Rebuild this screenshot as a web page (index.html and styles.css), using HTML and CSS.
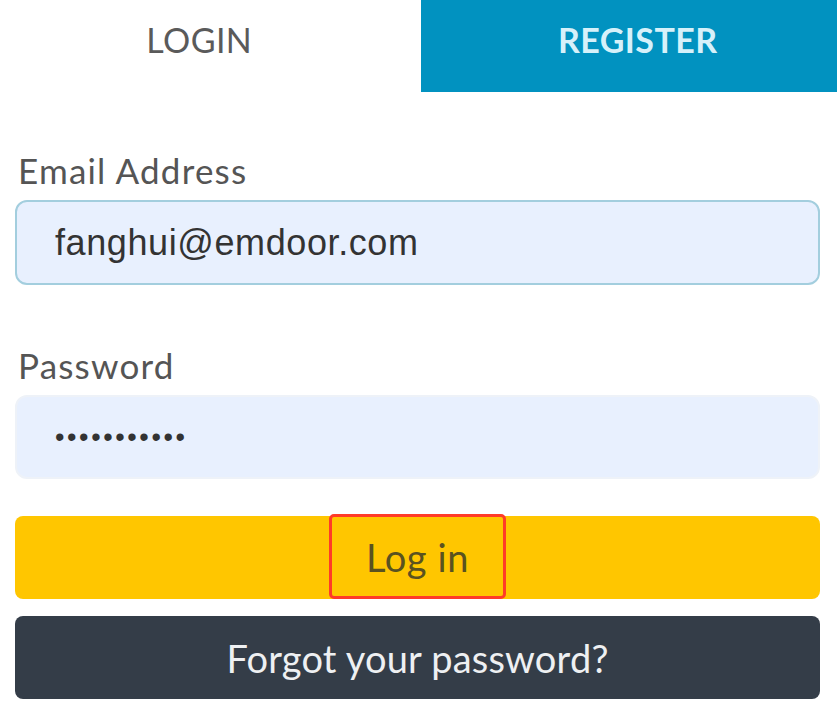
FILE: index.html
```html
<!DOCTYPE html>
<html lang="en">
<head>
  <meta charset="UTF-8" />
  <meta name="viewport" content="width=device-width, initial-scale=1.0"/>
  <title>Login</title>
  <link rel="stylesheet" href="styles.css">
</head>
<body>

<div class="tabs">
  <div class="tab active">LOGIN</div>
  <div class="tab register">REGISTER</div>
</div>

<form class="login-form" onsubmit="return false">
  <label for="email">Email Address</label>
  <input type="text" id="email" class="field focused" value="fanghui@emdoor.com">

  <label for="password" class="second">Password</label>
  <input type="password" id="password" class="field" value="12345678901">

  <button type="submit" class="btn btn-login"><span class="mark">Log in</span></button>
  <button type="button" class="btn btn-forgot">Forgot your password?</button>
</form>

</body>
</html>
```

FILE: styles.css
```css
body {
  margin: 0;
  background: #fff;
  font-family: Lato, "Open Sans", sans-serif;
}

.tabs {
  display: flex;
  height: 92px;
}

.tab {
  flex: 1;
  display: flex;
  align-items: center;
  justify-content: center;
  padding-bottom: 13px;
  box-sizing: border-box;
  font-size: 34px;
  letter-spacing: 0.4px;
}

.tab.active {
  color: #5a5a5a;
  padding-right: 22px;
}

.tab.register {
  background: #0192c0;
  color: #d6f1fa;
  font-weight: bold;
  padding-left: 18px;
}

.login-form {
  padding: 58px 17px 0 15px;
  display: flex;
  flex-direction: column;
}

label {
  font-size: 35px;
  color: #555;
  line-height: 40px;
  letter-spacing: 1.2px;
  margin-left: 3px;
  margin-bottom: 10px;
}

label.second {
  margin-top: 60px;
}

.field {
  height: 85px;
  box-sizing: border-box;
  border: 2px solid #eef2f8;
  border-radius: 12px;
  background: #e8f0fe;
  padding: 0 38px;
  font-family: "Liberation Sans", Arial, sans-serif;
  font-size: 36px;
  letter-spacing: 0.6px;
  color: #333;
  outline: none;
}

.field.focused {
  border-color: #a3cede;
}

#password {
  height: 84px;
  font-size: 27px;
  letter-spacing: 2.6px;
}

.btn {
  height: 83px;
  border: none;
  border-radius: 8px;
  font-family: Lato, "Open Sans", sans-serif;
  font-size: 38px;
  cursor: pointer;
}

.btn-login {
  margin-top: 37px;
  background: #ffc600;
  color: #5a5220;
  display: flex;
  justify-content: center;
  align-items: stretch;
  padding: 0;
  letter-spacing: 0.6px;
}

.mark {
  display: flex;
  align-items: center;
  justify-content: center;
  width: 177px;
  box-sizing: border-box;
  margin-top: -2px;
  border: 3px solid #ff3b28;
  border-radius: 5px;
}

.btn-forgot {
  margin-top: 17px;
  background: #343d48;
  color: #eef0f2;
  letter-spacing: 0.2px;
}
```
